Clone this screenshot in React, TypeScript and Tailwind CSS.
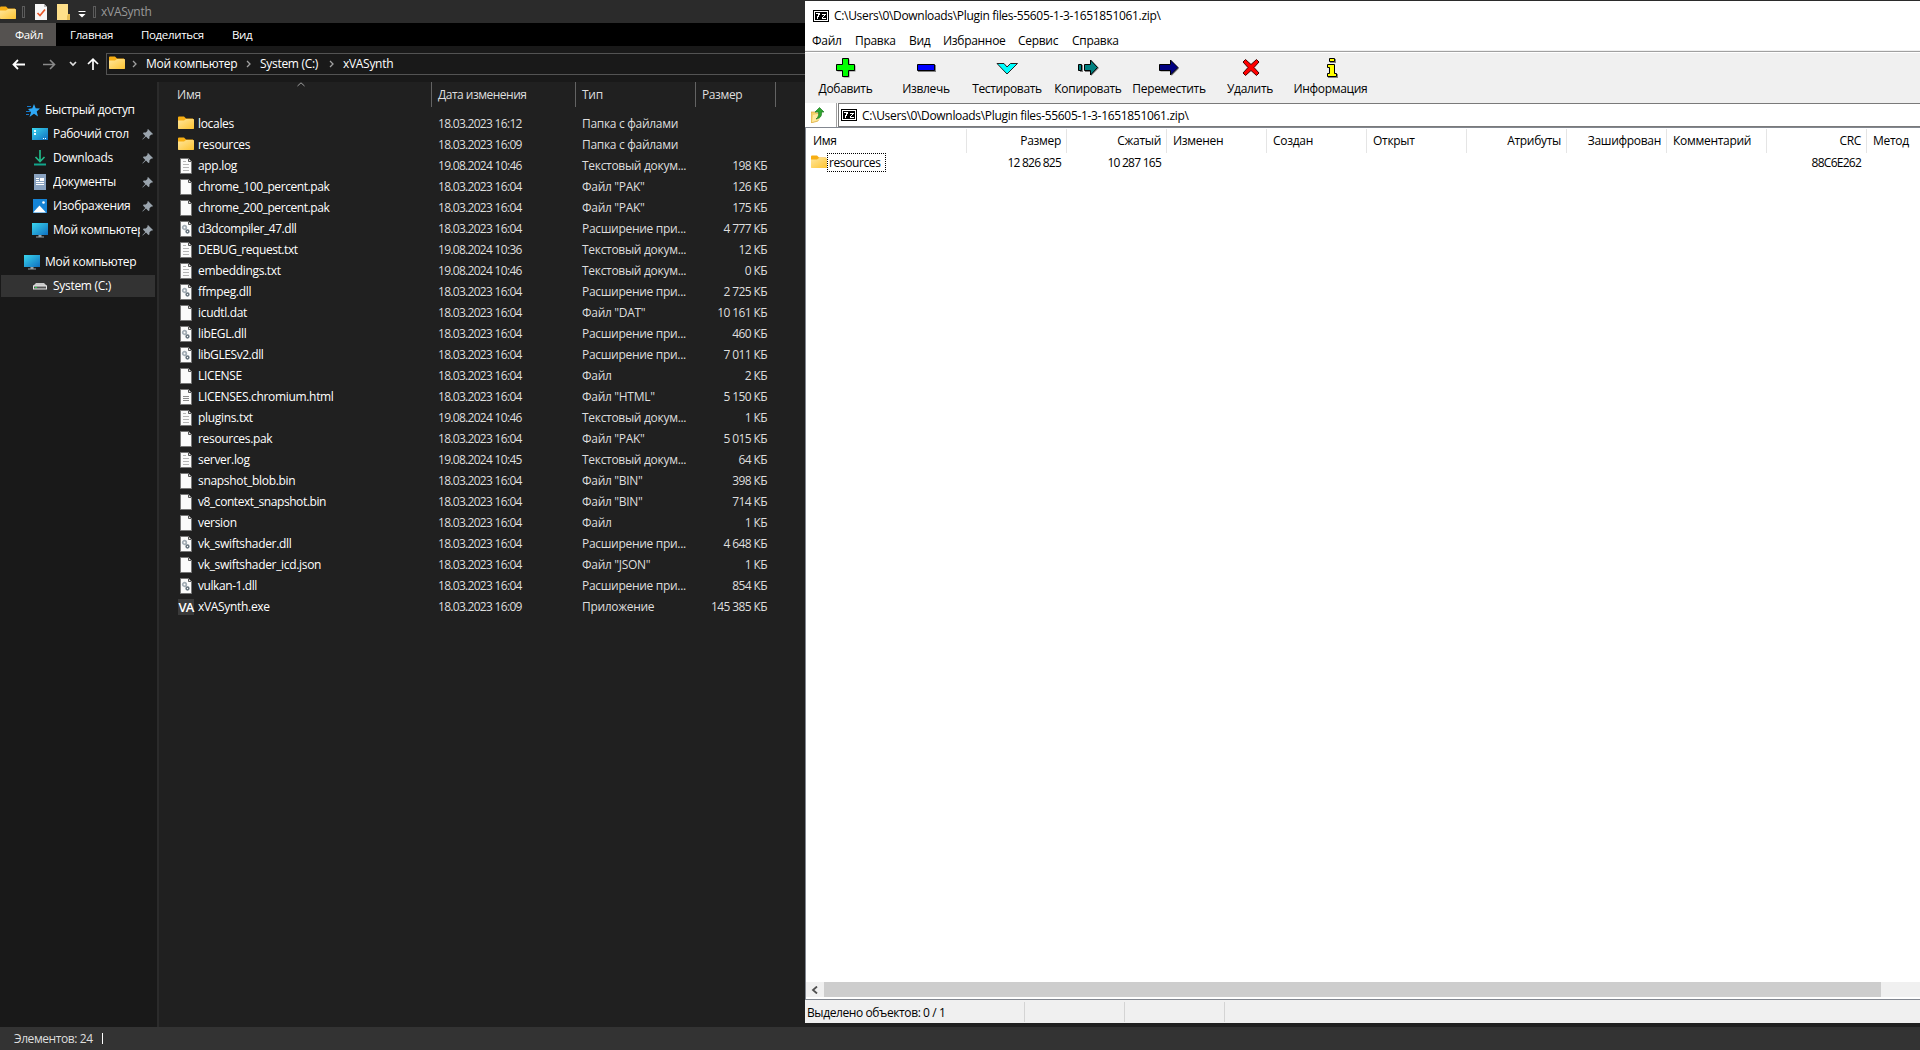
import { type ReactNode } from "react";
import clsx from "clsx";

type Kind = "folder" | "text" | "blank" | "dll" | "html" | "exe";

const files: [string, string, string, string, Kind][] = [
  ["locales", "18.03.2023 16:12", "Папка с файлами", "", "folder"],
  ["resources", "18.03.2023 16:09", "Папка с файлами", "", "folder"],
  ["app.log", "19.08.2024 10:46", "Текстовый докум...", "198 КБ", "text"],
  ["chrome_100_percent.pak", "18.03.2023 16:04", 'Файл "PAK"', "126 КБ", "blank"],
  ["chrome_200_percent.pak", "18.03.2023 16:04", 'Файл "PAK"', "175 КБ", "blank"],
  ["d3dcompiler_47.dll", "18.03.2023 16:04", "Расширение при...", "4 777 КБ", "dll"],
  ["DEBUG_request.txt", "19.08.2024 10:36", "Текстовый докум...", "12 КБ", "text"],
  ["embeddings.txt", "19.08.2024 10:46", "Текстовый докум...", "0 КБ", "text"],
  ["ffmpeg.dll", "18.03.2023 16:04", "Расширение при...", "2 725 КБ", "dll"],
  ["icudtl.dat", "18.03.2023 16:04", 'Файл "DAT"', "10 161 КБ", "blank"],
  ["libEGL.dll", "18.03.2023 16:04", "Расширение при...", "460 КБ", "dll"],
  ["libGLESv2.dll", "18.03.2023 16:04", "Расширение при...", "7 011 КБ", "dll"],
  ["LICENSE", "18.03.2023 16:04", "Файл", "2 КБ", "blank"],
  ["LICENSES.chromium.html", "18.03.2023 16:04", 'Файл "HTML"', "5 150 КБ", "html"],
  ["plugins.txt", "19.08.2024 10:46", "Текстовый докум...", "1 КБ", "text"],
  ["resources.pak", "18.03.2023 16:04", 'Файл "PAK"', "5 015 КБ", "blank"],
  ["server.log", "19.08.2024 10:45", "Текстовый докум...", "64 КБ", "text"],
  ["snapshot_blob.bin", "18.03.2023 16:04", 'Файл "BIN"', "398 КБ", "blank"],
  ["v8_context_snapshot.bin", "18.03.2023 16:04", 'Файл "BIN"', "714 КБ", "blank"],
  ["version", "18.03.2023 16:04", "Файл", "1 КБ", "blank"],
  ["vk_swiftshader.dll", "18.03.2023 16:04", "Расширение при...", "4 648 КБ", "dll"],
  ["vk_swiftshader_icd.json", "18.03.2023 16:04", 'Файл "JSON"', "1 КБ", "blank"],
  ["vulkan-1.dll", "18.03.2023 16:04", "Расширение при...", "854 КБ", "dll"],
  ["xVASynth.exe", "18.03.2023 16:09", "Приложение", "145 385 КБ", "exe"],
];

function Svg({ w = 16, h = 16, className, children }: { w?: number; h?: number; className?: string; children: ReactNode }) {
  return (
    <svg width={w} height={h} viewBox={`0 0 ${w} ${h}`} fill="none" className={clsx("shrink-0", className)}>
      {children}
    </svg>
  );
}

function FolderIcon({ className }: { className?: string }) {
  return (
    <Svg className={className}>
      <defs>
        <linearGradient id="folder" x1="0" y1="0" x2="1" y2="1">
          <stop offset="0" stopColor="#ffe69c" />
          <stop offset="1" stopColor="#fdc431" />
        </linearGradient>
      </defs>
      <path d="M0 2V1.500A1 1 0 0 1 1 .500H6L8 2.500H15V5H0Z" fill="#f7ae12" />
      <path d="M0 4.500H6L8 3H15.500L16 3.500V12.500L15.500 13H.500L0 12.500Z" fill="url(#folder)" />
    </Svg>
  );
}

function FileIcon({ kind }: { kind: Kind }) {
  if (kind === "folder") return <FolderIcon />;
  if (kind === "exe") {
    return (
      <span className="flex h-4 w-4 shrink-0 items-center justify-center bg-[#3a3a3a] font-['Open_Sans',sans-serif] text-[13px] leading-4 font-semibold tracking-[-0.8px] text-white">
        VA
      </span>
    );
  }
  return (
    <Svg>
      <path d="M2.500 .500H10.500L13.500 3.500V15.500H2.500Z" fill="#fbfbfb" stroke="#777" />
      <path d="M10.500 1V3.500H13" fill="#dedede" stroke="#555" />
      {kind === "text" && <path d="M5 3.500H8M5 6.500H11M5 9.500H11M5 12.500H11" stroke="#b5b5b5" />}
      {kind === "html" && <path d="M5 7.500H11M5 9.500H11M5 11.500H11" stroke="#8a8a8a" />}
      {kind === "dll" && (
        <>
          <circle cx="6.500" cy="6.500" r="1.800" stroke="#a3adb5" strokeWidth="1.700" />
          <circle cx="9.500" cy="10.500" r="1.400" stroke="#66737d" strokeWidth="1.500" />
        </>
      )}
    </Svg>
  );
}

function MonitorIcon() {
  return (
    <Svg>
      <defs>
        <linearGradient id="screen" x1="0" y1="0" x2="1" y2="1">
          <stop offset="0" stopColor="#3ad6ee" />
          <stop offset="1" stopColor="#0f6fc0" />
        </linearGradient>
      </defs>
      <path d="M0 1H16V13H0Z" fill="url(#screen)" />
      <path d="M6.500 13H9.500V14.500H12V15.500H4V14.500H6.500Z" fill="#9aa3a8" />
    </Svg>
  );
}

function PinIcon() {
  return (
    <Svg w={11} h={11}>
      <path d="M6 0L11 5L10 5.700L9.300 5.400L7.500 7.300L7.400 9.400L6.400 10L4 7.500L.800 10.600L.300 10.200L3.300 6.900L1 4.500L1.600 3.600L3.800 3.500L5.600 1.700L5.300 1Z" fill="#9ba5ae" />
    </Svg>
  );
}

const quickIcons = {
  desktop: (
    <Svg>
      <path d="M0 2H16V14H0Z" fill="url(#screen)" />
      <path d="M2 4H4V6H2ZM2 7H4V9H2Z" fill="#e9fbff" />
      <path d="M11 12H12V13H11ZM13 12H14V13H13Z" fill="#fff" />
    </Svg>
  ),
  downloads: (
    <Svg>
      <path d="M8 0V11M3.500 7L8 11.500L12.500 7" stroke="#22b788" strokeWidth="1.700" />
      <path d="M2 14.500H14" stroke="#12a58c" strokeWidth="2" />
    </Svg>
  ),
  documents: (
    <Svg>
      <path d="M2 0H14V16H2Z" fill="#8aa3c1" />
      <path d="M4 4.500H7M4 6.500H7M4 8.500H12M4 10.500H12" stroke="#fff" />
      <path d="M8 4H12V7H8Z" fill="#fff" />
    </Svg>
  ),
  images: (
    <Svg>
      <path d="M1 1H15V15H1Z" fill="#1583d5" />
      <path d="M1.500 14L7.500 7.500L14 14.500H1.500Z" fill="#fff" />
      <circle cx="11.500" cy="4.500" r="1.300" fill="#fff" />
    </Svg>
  ),
  computer: <MonitorIcon />,
};

const quickAccess: [keyof typeof quickIcons, string][] = [
  ["desktop", "Рабочий стол"],
  ["downloads", "Downloads"],
  ["documents", "Документы"],
  ["images", "Изображения"],
  ["computer", "Мой компьютер"],
];

function Crumb() {
  return (
    <Svg w={5} h={8}>
      <path d="M1 1L4 4L1 7" stroke="#a0a0a0" strokeWidth="1.300" />
    </Svg>
  );
}

function Explorer() {
  return (
    <div className="flex h-[1050px] w-[805px] shrink-0 flex-col bg-[#191919] text-white">
      <div className="flex h-[23px] items-center bg-[#2b2b2b]">
        <FolderIcon className="mt-1" />
        <div className="ml-1.5 h-3 w-[3px] border border-[#5c5c5c]" />
        <Svg w={12} className="ml-2.5">
          <path d="M0 0H9L12 3V16H0Z" fill="#f7f7f7" />
          <path d="M9 0V3H12" fill="#bbb" />
          <path d="M2.500 9L5 11.500L10 5.500" stroke="#e8582a" strokeWidth="1.700" />
        </Svg>
        <Svg w={13} className="ml-2.5">
          <path d="M0 0H11V10H13V16H0Z" fill="#ffe08a" />
          <path d="M11 10H13V16H10V12Z" fill="#e6bd55" />
        </Svg>
        <Svg w={8} h={8} className="mt-1 ml-2">
          <path d="M.500 1.500H7.500" stroke="#fff" />
          <path d="M.500 4H7.500L4 7.500Z" fill="#fff" />
        </Svg>
        <div className="ml-[7px] h-3 w-[3px] border border-[#5c5c5c]" />
        <span className="ml-[5px] tracking-[-0.25px] text-[#999]">xVASynth</span>
      </div>

      <div className="flex h-[23px] items-center bg-black text-[11.5px] tracking-[-0.35px]">
        <div className="flex h-full w-14 items-center bg-[#555250] pl-[15px]">Файл</div>
        <span className="ml-3.5 w-[71px]">Главная</span>
        <span className="w-[91px]">Поделиться</span>
        <span>Вид</span>
      </div>

      <div className="flex h-9 items-center">
        <Svg w={13} h={11} className="ml-3">
          <path d="M13 5.500H1.500M6 1L1.500 5.500L6 10" stroke="#fff" strokeWidth="1.800" />
        </Svg>
        <Svg w={13} h={11} className="ml-[18px]">
          <path d="M0 5.500H11.500M7 1L11.500 5.500L7 10" stroke="#8a8a8a" strokeWidth="1.600" />
        </Svg>
        <Svg w={8} h={6} className="ml-[13px]">
          <path d="M1 1L4 4L7 1" stroke="#ddd" strokeWidth="1.700" />
        </Svg>
        <Svg w={12} h={12} className="ml-2.5">
          <path d="M6 12V1.500M1 6L6 1.200L11 6" stroke="#fff" strokeWidth="1.700" />
        </Svg>
        <div className="ml-[7px] flex h-[22px] flex-1 items-center border border-r-0 border-[#535353]">
          <FolderIcon className="ml-0.5" />
          <div className="ml-[7px]"><Crumb /></div>
          <span className="ml-[9px] w-[100px] tracking-[-0.3px]">Мой компьютер</span>
          <Crumb />
          <span className="ml-[9px] w-[69px] tracking-[-0.3px]">System (C:)</span>
          <Crumb />
          <span className="ml-[9px] tracking-[-0.3px]">xVASynth</span>
        </div>
      </div>

      <div className="flex min-h-0 flex-1">
        <div className="w-[157px] pt-4">
          <div className="flex h-6 items-center pl-[26px]">
            <Svg w={14} h={13}>
              <path d="M8 0L9.700 4.200L14 4.500L10.700 7.400L12 12.500L8 9.800L3.500 13L5 8.200L2 5L6.300 4.300Z" fill="#2ea8f5" />
              <path d="M1 2.500H5M0 7.500H4M0 10.500H3" stroke="#1678c8" />
            </Svg>
            <span className="ml-[5px] tracking-[-0.32px]">Быстрый доступ</span>
          </div>
          {quickAccess.map(([icon, label]) => (
            <div key={label} className="flex h-6 items-center pl-8">
              {quickIcons[icon]}
              <span className="ml-[5px] w-[87px] overflow-hidden tracking-[-0.3px] whitespace-nowrap">{label}</span>
              <div className="ml-0.5"><PinIcon /></div>
            </div>
          ))}
          <div className="mt-2 flex h-6 items-center pl-6">
            <MonitorIcon />
            <span className="ml-[5px] tracking-[-0.3px]">Мой компьютер</span>
          </div>
          <div className="mt-px ml-px flex h-[22px] w-[154px] items-center bg-[#333] pl-8">
            <Svg w={14} h={8}>
              <path d="M3 1H11L14 4H0Z" fill="#c9c9c9" />
              <path d="M0 3.500H14V7.500H0Z" fill="#e6e6e6" />
              <path d="M1 4.500H13V6.500H1Z" fill="#555" />
              <path d="M2 5H4V6H2Z" fill="#27d34b" />
            </Svg>
            <span className="ml-1.5 tracking-[-0.3px]">System (C:)</span>
          </div>
        </div>
        <div className="flex-1 border-l-2 border-[#2b2b2b] bg-[#202020]">
          <div className="relative flex h-[25px] text-[#dedede] [&>div]:flex [&>div]:items-center [&>div]:border-r [&>div]:border-[#636363]">
            <Svg w={8} h={5} className="absolute top-0 left-[138px]">
              <path d="M.500 4L4 .800L7.500 4" stroke="#a0a0a0" />
            </Svg>
            <div className="w-[273px] pl-[18px] tracking-[-0.2px]">Имя</div>
            <div className="w-36 pl-1.5 tracking-[-0.5px]">Дата изменения</div>
            <div className="w-[120px] pl-1.5 tracking-[-0.3px]">Тип</div>
            <div className="w-20 pl-1.5 tracking-[-0.4px]">Размер</div>
          </div>
          <div className="pt-1.5">
            {files.map(([name, date, type, size, kind]) => (
              <div key={name} className="flex h-[21px] items-center pl-[19px] text-[#dedede]">
                <FileIcon kind={kind} />
                <span className={clsx("ml-1 w-60 text-white", /\d|DEBUG/.test(name) ? "tracking-[-0.43px]" : "tracking-[-0.32px]")}>
                  {name}
                </span>
                <span className="w-36 tracking-[-0.7px]">{date}</span>
                <span className="w-[106px] tracking-[-0.3px] whitespace-nowrap">{type}</span>
                <span className="w-[79px] text-right tracking-[-0.6px]">{size}</span>
              </div>
            ))}
          </div>
        </div>
      </div>

      <div className="flex h-[23px] items-center bg-[#333] pl-3.5 text-[#dedede]">
        <span className="w-[88px] tracking-[-0.42px]">Элементов: 24</span>
        <div className="h-[11px] w-px bg-white" />
      </div>
    </div>
  );
}

function SevenZipLogo() {
  return (
    <Svg h={12}>
      <path d="M0 0H16V12H0Z" fill="#000" />
      <path d="M1 1H15V11H1Z" fill="#fff" />
      <path d="M2 2H14V10H2Z" fill="#000" />
      <path d="M3 3H7V5H6V7H5V9H4V6H5V4H3Z" fill="#fff" />
      <path d="M9 4H13V5H12V6H11V7H10V8H13V9H9V7H10V6H11V5H9Z" fill="#fff" />
    </Svg>
  );
}

const plus = "M6.500 .500H12.500V6.500H18.500V12.500H12.500V18.500H6.500V12.500H.500V6.500H6.500Z";
const slimArrow = "M1 6H12V1.500L19.500 9L12 16.500V12H1Z";

const tools: { label: string; width: string; icon: ReactNode }[] = [
  {
    label: "Добавить",
    width: "w-[81px]",
    icon: (
      <Svg w={20} h={20}>
        <path d={plus} fill="#808080" transform="translate(1 1)" />
        <path d={plus} fill="#0f0" stroke="#000" />
      </Svg>
    ),
  },
  {
    label: "Извлечь",
    width: "w-20",
    icon: (
      <Svg w={20} h={20}>
        <path d="M2 7H20V14H2Z" fill="#808080" />
        <path d="M1.500 6.500H18.500V12.500H1.500Z" fill="#00f" stroke="#000" />
      </Svg>
    ),
  },
  {
    label: "Тестировать",
    width: "w-[82px]",
    icon: (
      <Svg w={22} h={20}>
        <path d="M1 5.500H8L11 9L14.500 5.500H21.500L11 16Z" fill="#0ff" stroke="#222" />
      </Svg>
    ),
  },
  {
    label: "Копировать",
    width: "w-20",
    icon: (
      <Svg w={22} h={20}>
        <path d="M3 7H6V14H3ZM8 7H14V2L22 10L14 18V14H8Z" fill="#808080" />
        <path d="M1.500 6.500H4.500V12.500H1.500ZM7.500 6.500H13.500V2L20.500 9.500L13.500 17V12.500H7.500Z" fill="#008080" stroke="#000" />
      </Svg>
    ),
  },
  {
    label: "Переместить",
    width: "w-[82px]",
    icon: (
      <Svg w={22} h={20}>
        <path d={slimArrow} fill="#808080" transform="translate(1.500 1.500)" />
        <path d={slimArrow} fill="#000080" stroke="#000" transform="translate(.500 .500)" />
      </Svg>
    ),
  },
  {
    label: "Удалить",
    width: "w-20",
    icon: (
      <Svg w={20} h={20} className="ml-0.5">
        <path d="M4.500 1.500L10 6.500L15.500 1.500L18 4L13 9.500L18 15L15.500 17.500L10 12.500L4.500 17.500L2 15L7 9.500L2 4Z" fill="#f00" stroke="#400" />
      </Svg>
    ),
  },
  {
    label: "Информация",
    width: "w-[81px]",
    icon: (
      <Svg w={12} h={20} className="ml-0.5">
        <path d="M4 1H10V5H4ZM2 7H9V16H12V20H2V16H4V10H2Z" fill="#808080" />
        <path d="M3.500 .500H8.500V3.500H3.500ZM1.500 6.500H8.500V15.500H10.500V18.500H1.500V15.500H3.500V9.500H1.500Z" fill="#ff0" stroke="#000" />
      </Svg>
    ),
  },
];

const columns: { label: string; right?: boolean; value?: string }[] = [
  { label: "Размер", right: true, value: "12 826 825" },
  { label: "Сжатый", right: true, value: "10 287 165" },
  { label: "Изменен" },
  { label: "Создан" },
  { label: "Открыт" },
  { label: "Атрибуты", right: true },
  { label: "Зашифрован", right: true },
  { label: "Комментарий" },
  { label: "CRC", right: true, value: "88C6E262" },
];

const archivePath = "C:\\Users\\0\\Downloads\\Plugin files-55605-1-3-1651851061.zip\\";

function SevenZip() {
  return (
    <div className="flex h-full flex-1 flex-col">
      <div className="h-px shrink-0 bg-[#2b2b2b]" />
      <div className="flex h-[1022px] flex-col bg-white text-black">
        <div className="flex h-7 items-center pt-px pl-2">
          <SevenZipLogo />
          <span className="mt-px ml-[5px] tracking-[-0.32px]">{archivePath}</span>
        </div>
        <div className="flex h-[21px] items-center pt-0.5 pl-[7px] tracking-[-0.3px]">
          <span className="w-[43px]">Файл</span>
          <span className="w-[54px]">Правка</span>
          <span className="w-[34px]">Вид</span>
          <span className="w-[75px]">Избранное</span>
          <span className="w-[54px]">Сервис</span>
          <span>Справка</span>
        </div>
        <div className="h-[3px] border-t border-b border-t-[#f0f0f0] border-b-white bg-[#a0a0a0]" />
        <div className="flex h-[50px] bg-[#f0f0f0]">
          {tools.map(({ label, width, icon }) => (
            <div key={label} className={clsx("flex shrink-0 flex-col items-center", width)}>
              <div className="mt-[5px] flex h-5 items-center">{icon}</div>
              <span className="mt-px leading-5 tracking-[-0.32px] whitespace-nowrap">{label}</span>
            </div>
          ))}
        </div>
        <div className="flex h-6">
          <div className="flex w-8 items-center border-r border-[#a0a0a0] pl-1.5">
            <Svg w={13}>
              <path d="M0 5H4L5 6H9V9L7 14L0 16Z" fill="#f4d36c" stroke="#d8a83a" strokeWidth=".700" />
              <path d="M2 8L11 6L8 13L1 15Z" fill="#ffe9a0" />
              <path d="M8.500 .500L13 5H10.500C11 9 9.500 11 5 12C7.500 10 8 8 7.500 5H4Z" fill="#2fa52f" stroke="#1d7a22" strokeWidth=".700" />
            </Svg>
          </div>
          <div className="ml-px flex flex-1 items-center border-t border-b border-l border-[#7a7a7a] pl-0.5">
            <SevenZipLogo />
            <span className="mt-0.5 ml-[5px] tracking-[-0.32px]">{archivePath}</span>
          </div>
        </div>

        <div className="flex flex-1 flex-col border-t border-b border-l border-[#828790]">
          <div className="grid h-[25px] grid-cols-[161px_repeat(9,100px)_54px] pt-px [&>div]:flex [&>div]:items-center [&>div]:border-r [&>div]:border-[#e5e5e5] [&>div]:tracking-[-0.3px]">
            <div className="pl-[7px]">Имя</div>
            {columns.map(({ label, right }) => (
              <div key={label} className={right ? "justify-end pr-[5px]" : "pl-1.5"}>{label}</div>
            ))}
            <div className="border-r-0! pl-1.5">Метод</div>
          </div>
          <div className="grid h-[19px] grid-cols-[161px_repeat(9,100px)_54px] items-center">
            <div className="flex items-center pl-[5px] tracking-[-0.4px]">
              <FolderIcon />
              <span className="h-[19px] border border-dotted border-black px-px leading-[18px]">
                <span className="pr-1">resources</span>
              </span>
            </div>
            {columns.map(({ label, value }) => (
              <div key={label} className="pr-1.5 text-right tracking-[-0.75px]">{value}</div>
            ))}
          </div>
          <div className="flex-1" />
          <div className="mb-0.5 flex h-[15px] bg-[#f0f0f0]">
            <div className="flex w-[18px] items-center justify-center pr-0.5">
              <Svg w={7} h={8}>
                <path d="M6 .500L2 4L6 7.500" stroke="#505050" strokeWidth="1.800" />
              </Svg>
            </div>
            <div className="w-[1057px] bg-[#cdcdcd]" />
          </div>
        </div>

        <div className="flex h-[23px] items-center bg-[#f0f0f0] [&>div]:h-5 [&>div]:border-r [&>div]:border-[#d4d4d4]">
          <div className="flex w-[220px] items-center pt-0.5 pl-0.5 tracking-[-0.4px]">Выделено объектов: 0 / 1</div>
          <div className="w-[100px]" />
          <div className="w-[100px]" />
        </div>
      </div>
      <div className="h-1 bg-[#202020]" />
      <div className="flex-1 bg-[#333]" />
    </div>
  );
}

export default function App() {
  return (
    <div className="flex h-[1050px] w-[1920px] overflow-hidden bg-[#202020] font-['Open_Sans',sans-serif] text-[12px] leading-4">
      <Explorer />
      <SevenZip />
    </div>
  );
}
